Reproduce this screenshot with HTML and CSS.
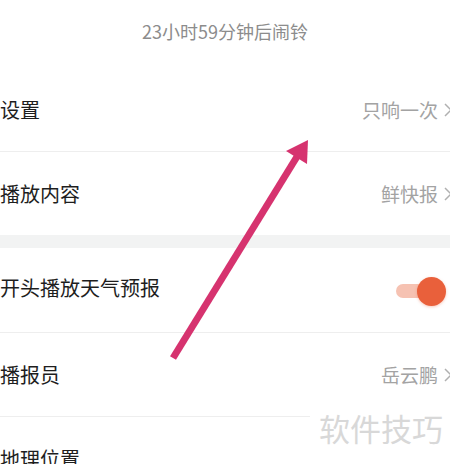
FILE: index.html
```html
<!DOCTYPE html>
<html lang="zh-CN">
<head>
    <meta charset="UTF-8">
    <meta name="viewport" content="width=device-width, initial-scale=1.0">
    <title>闹钟设置</title>
    <link rel="stylesheet" href="styles.css">
</head>
<body>

    <div class="page">
        <div class="countdown">23小时59分钟后闹铃</div>

        <div class="row">
            <span class="label">设置</span>
            <span class="value">只响一次
                <svg class="chev" width="8" height="14" viewBox="0 0 8 14"><path d="M1 1l6 6-6 6" fill="none" stroke="#b0b0b0" stroke-width="1.5"/></svg>
            </span>
        </div>
        <div class="row">
            <span class="label">播放内容</span>
            <span class="value">鲜快报
                <svg class="chev" width="8" height="14" viewBox="0 0 8 14"><path d="M1 1l6 6-6 6" fill="none" stroke="#b0b0b0" stroke-width="1.5"/></svg>
            </span>
        </div>

        <div class="band"></div>

        <div class="row row-switch">
            <span class="label">开头播放天气预报</span>
            <span class="switch on"><span class="knob"></span></span>
        </div>
        <div class="row">
            <span class="label">播报员</span>
            <span class="value">岳云鹏
                <svg class="chev" width="8" height="14" viewBox="0 0 8 14"><path d="M1 1l6 6-6 6" fill="none" stroke="#b0b0b0" stroke-width="1.5"/></svg>
            </span>
        </div>
        <div class="row">
            <span class="label">地理位置</span>
        </div>
    </div>

    <!-- annotation arrow drawn over the screenshot -->
    <svg class="arrow" width="450" height="464" viewBox="0 0 450 464">
        <line x1="173" y1="358" x2="298" y2="155" stroke="#d6336f" stroke-width="7"/>
        <polygon points="308,140 286,151 307,164" fill="#d6336f"/>
    </svg>

    <div class="watermark">软件技巧</div>

</body>
</html>
```

FILE: styles.css
```css
body {
    margin: 0;
    background: #fff;
    font-family: "Noto Sans CJK SC", "Noto Sans", sans-serif;
    overflow: hidden;
    width: 450px;
    height: 464px;
    position: relative;
}

.page {
    width: 462px;
}

.countdown {
    height: 68px;
    box-sizing: border-box;
    padding: 20px 12px 0 0;
    line-height: 22px;
    font-size: 18px;
    color: #8c8c8c;
    text-align: center;
}

.row {
    height: 84px;
    box-sizing: border-box;
    display: flex;
    align-items: center;
    justify-content: space-between;
    padding-right: 10px;
    border-bottom: 1px solid #eeeeee;
}

.row:nth-child(3) {
    height: 83px;
    border-bottom: none;
}

.row-switch {
    height: 85px;
    padding-bottom: 6px;
}

.label {
    font-size: 20px;
    color: #1e1e1e;
}

.value {
    display: flex;
    align-items: center;
    gap: 6px;
    font-size: 19px;
    color: #a3a3a3;
}

.band {
    height: 13px;
    background: #f2f3f3;
}

.switch {
    position: relative;
    width: 42px;
    height: 14px;
    margin: 8px 14px 0 0;
    border-radius: 7px;
    background: #f6c2b2;
}

.switch .knob {
    position: absolute;
    right: -8px;
    top: -7px;
    width: 29px;
    height: 29px;
    border-radius: 50%;
    background: #e9603b;
    box-shadow: 0 1px 3px rgba(233, 96, 59, 0.35);
}

.arrow {
    position: absolute;
    left: 0;
    top: 0;
}

.watermark {
    position: absolute;
    left: 310px;
    top: 406px;
    width: 140px;
    height: 44px;
    padding-left: 9px;
    box-sizing: border-box;
    background: #fff;
    font-size: 31px;
    line-height: 44px;
    color: #d8d8d8;
}
```
